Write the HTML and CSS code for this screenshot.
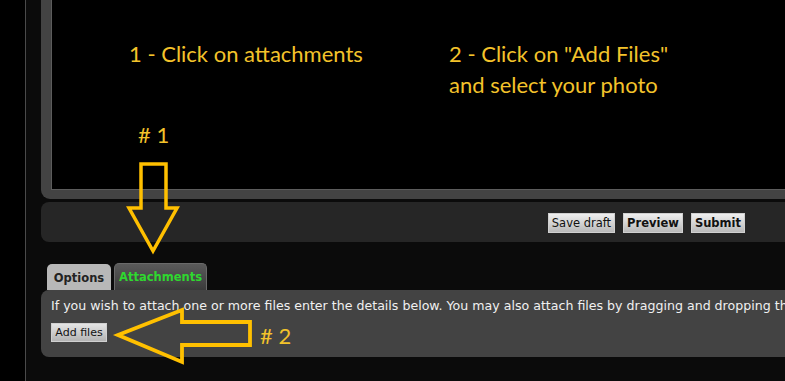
FILE: index.html
```html
<!DOCTYPE html>
<html>
<head>
<meta charset="utf-8">
<link rel="stylesheet" href="styles.css">
</head>
<body>
<div class="page">
  <div class="sidebar"></div>
  <div class="main">
    <div class="editor">
      <div class="textarea"></div>
    </div>
    <div class="toolbar">
      <button class="btn">Save draft</button>
      <button class="btn bold">Preview</button>
      <button class="btn bold">Submit</button>
    </div>
    <div class="tabs">
      <div class="tab tab-options">Options</div>
      <div class="tab tab-attach">Attachments</div>
    </div>
    <div class="panel">
      <p class="panel-text">If you wish to attach one or more files enter the details below. You may also attach files by dragging and dropping th</p>
      <button class="btn add">Add files</button>
    </div>
  </div>
</div>

<div class="note note-1">1 - Click on attachments</div>
<div class="note note-2">2 - Click on "Add Files"<br>and select your photo</div>
<div class="note note-h1"># 1</div>
<div class="note note-h2"># 2</div>

<svg class="arrow arrow-down" width="60" height="100" viewBox="0 0 60 100">
  <polygon points="13,2 38,2 38,46 49,46 25,89 1,46 13,46" fill="none" stroke="#ffc000" stroke-width="3.5" stroke-linejoin="miter"/>
</svg>
<svg class="arrow arrow-left" width="140" height="60" viewBox="0 0 140 60">
  <polygon points="2,26 66,1 66,13 134,13 134,36 66,36 66,53" fill="none" stroke="#ffc000" stroke-width="3.8" stroke-linejoin="miter"/>
</svg>
</body>
</html>
```

FILE: styles.css
```css
html, body {
  margin: 0;
  padding: 0;
  background: #000;
  overflow: hidden;
}
body {
  width: 785px;
  height: 381px;
  position: relative;
  font-family: "DejaVu Sans", Verdana, sans-serif;
}
.page {
  display: flex;
  height: 381px;
}
.sidebar {
  width: 25px;
  flex: none;
  background: #000;
}
.main {
  flex: 1;
  min-width: 0;
  background: #0b0b0b;
  border-left: 1px solid #4a4a4a;
  padding-left: 15px;
  overflow: hidden;
}
.editor {
  width: 760px;
  background: #434343;
  border-radius: 0 0 0 9px;
  padding: 0 0 9px 10px;
}
.textarea {
  height: 189px;
  background: #000;
  border-left: 1px solid #5c5c5c;
  border-bottom: 1px solid #5c5c5c;
}
.toolbar {
  width: 760px;
  margin-top: 3px;
  height: 40px;
  background: #262626;
  border-radius: 8px 0 0 8px;
  display: flex;
  align-items: center;
  justify-content: flex-end;
  gap: 8px;
  padding-right: 56px;
  box-sizing: border-box;
  padding-top: 2px;
}
.btn {
  font-family: "DejaVu Sans", Verdana, sans-serif;
  font-size: 11.5px;
  color: #111;
  height: 20px;
  padding: 0 3px;
  background: linear-gradient(#efefef, #b9b9b9);
  border: 1px solid #d0d0d0;
  border-radius: 0;
  line-height: 18px;
}
.bold {
  font-weight: bold;
}
.tabs {
  display: flex;
  align-items: flex-end;
  gap: 3px;
  margin-top: 21px;
  padding-left: 6px;
  height: 27px;
}
.tab {
  font-size: 11.5px;
  font-weight: bold;
  border-radius: 5px 5px 0 0;
  display: flex;
  align-items: center;
  justify-content: center;
  box-sizing: border-box;
}
.tab-options {
  width: 64px;
  height: 26px;
  background: #b8b8b8;
  color: #222;
  padding-top: 2px;
}
.tab-attach {
  width: 93px;
  height: 27px;
  background: linear-gradient(#5a5a5a, #3a3a3a);
  border: 1px solid #6a6a6a;
  border-bottom: none;
  color: #2fd82f;
}
.panel {
  width: 760px;
  height: 67px;
  background: #434343;
  border-radius: 8px 0 0 8px;
  padding: 8px 0 0 10px;
  box-sizing: border-box;
}
.panel-text {
  margin: 0;
  font-size: 12.6px;
  color: #f0f0f0;
  white-space: nowrap;
  line-height: 16px;
}
.add {
  margin-top: 9px;
  height: 19px;
  width: 56px;
  padding: 0;
  font-size: 11px;
  line-height: 17px;
  background: linear-gradient(#e4e4e4, #b4b4b4);
}
.note {
  position: absolute;
  font-family: Lato, "Open Sans", sans-serif;
  font-size: 22px;
  color: #f3c32b;
  line-height: 31px;
  white-space: nowrap;
}
.note-1 { left: 129px; top: 38px; }
.note-2 { left: 449px; top: 38px; }
.note-h1 { left: 138px; top: 119px; }
.note-h2 { left: 260px; top: 320px; }
.arrow {
  position: absolute;
  overflow: visible;
}
.arrow-down { left: 128px; top: 162px; }
.arrow-left { left: 116px; top: 309px; }
```
